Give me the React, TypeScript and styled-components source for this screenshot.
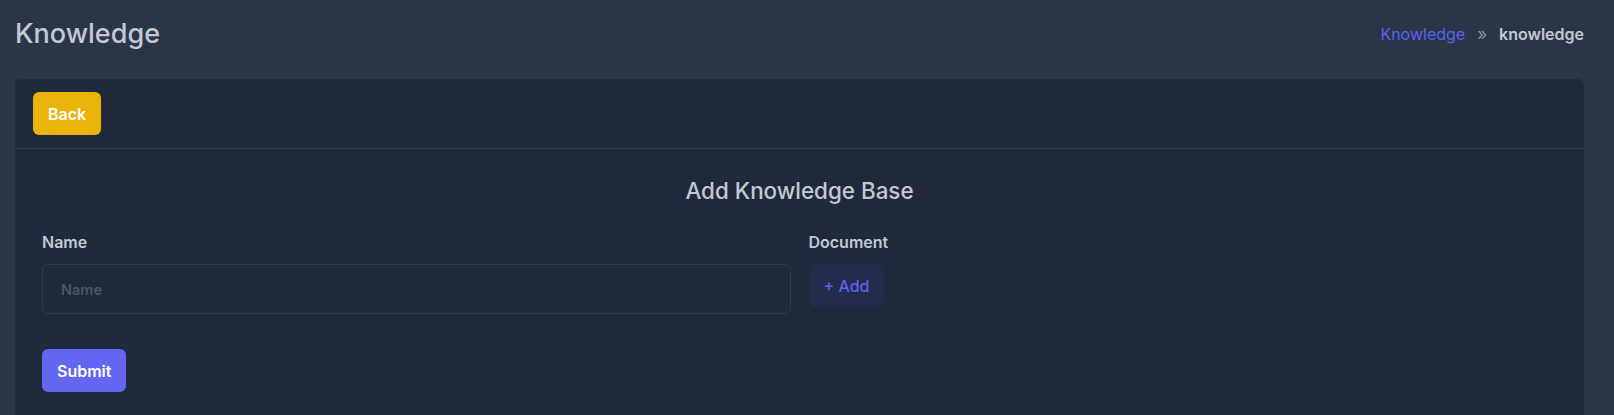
import React from "react";
import styled, { createGlobalStyle } from "styled-components";

const GlobalStyle = createGlobalStyle`
  * {
    box-sizing: border-box;
  }

  body {
    margin: 0;
    background-color: #2a3548;
    font-family: Inter, "Noto Sans", sans-serif;
  }
`;

// 지식베이스 추가 페이지
const App = () => {
  return (
    <>
      <GlobalStyle />
      <Page>
        <Header>
          <PageTitle>Knowledge</PageTitle>
          <Breadcrumb>
            <Crumb href="#">Knowledge</Crumb>
            <Separator>»</Separator>
            <Current>knowledge</Current>
          </Breadcrumb>
        </Header>

        <Card>
          <CardHeader>
            <Button variant="back">Back</Button>
          </CardHeader>
          <CardBody>
            <FormTitle>Add Knowledge Base</FormTitle>
            <FormGrid>
              <Field>
                <Label>Name</Label>
                <Input placeholder="Name" />
              </Field>
              <Field>
                <Label>Document</Label>
                <AddButton>+ Add</AddButton>
              </Field>
            </FormGrid>
            <Button variant="submit">Submit</Button>
          </CardBody>
        </Card>
      </Page>
    </>
  );
};

export default App;

const Page = styled.div`
  padding: 0 30px 0 15px;
  min-height: 415px;
`;

const Header = styled.div`
  display: flex;
  flex-direction: row;
  justify-content: space-between;
  align-items: center;

  height: 67px;
  margin-bottom: 12px;
`;

const PageTitle = styled.h1`
  margin: 0;

  color: #c3c9d2;
  font-size: 27px;
  font-weight: 500;
`;

const Breadcrumb = styled.nav`
  display: flex;
  flex-direction: row;
  align-items: center;
  gap: 12px;

  font-size: 16px;
`;

const Crumb = styled.a`
  color: #5b63f0;
  text-decoration: none;
`;

const Separator = styled.span`
  color: #8a93a3;
  font-size: 17px;
`;

const Current = styled.span`
  color: #c3c9d2;
  font-weight: 600;
`;

const Card = styled.div`
  background-color: #1f293b;
  border-radius: 6px 6px 0 0;
  min-height: 336px;
`;

const CardHeader = styled.div`
  display: flex;
  align-items: center;

  padding: 13px 18px;
  border-bottom: 1px solid #334155;
`;

const Button = styled.button<{ variant: "back" | "submit" }>`
  height: 43px;
  padding: 0 15px;

  background-color: ${({ variant }) =>
    variant === "back" ? "#eab308" : "#6366f1"};
  border: none;
  border-radius: 6px;

  color: #ffffff;
  font-family: inherit;
  font-size: 16px;
  font-weight: 600;
`;

const CardBody = styled.div`
  padding: 27px 27px 24px;
`;

const FormTitle = styled.h2`
  margin: 0 0 27px;

  color: #c3c9d2;
  font-size: 22.4px;
  font-weight: 500;
  line-height: 29px;
  text-align: center;
`;

const FormGrid = styled.div`
  display: grid;
  grid-template-columns: 1fr 1fr;
  gap: 18px;

  margin-bottom: 35px;
`;

const Field = styled.div`
  display: flex;
  flex-direction: column;
  align-items: flex-start;
`;

const Label = styled.label`
  margin-bottom: 12px;

  color: #c3c9d2;
  font-size: 16px;
  font-weight: 600;
  line-height: 20px;
`;

const Input = styled.input`
  width: 100%;
  height: 50px;
  padding: 0 18px;

  background-color: transparent;
  border: 1px solid #2e3a4e;
  border-radius: 6px;

  color: #c3c9d2;
  font-family: inherit;
  font-size: 14.5px;
  font-weight: 600;

  &::placeholder {
    color: #4b5566;
  }
`;

const AddButton = styled.button`
  height: 43px;
  padding: 0 15px;

  background-color: #232c4a;
  border: none;
  border-radius: 6px;

  color: #5b63f0;
  font-family: inherit;
  font-size: 16px;
  font-weight: 500;
`;
